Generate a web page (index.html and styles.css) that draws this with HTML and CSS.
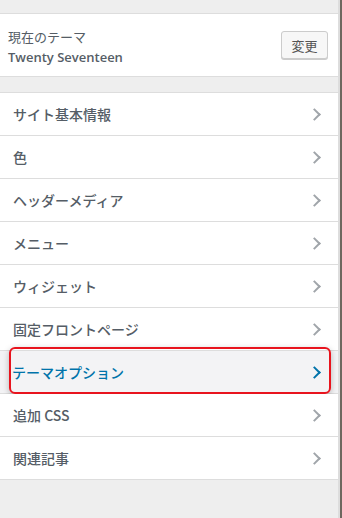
FILE: index.html
```html
<!DOCTYPE html>
<html lang="ja">
<head>
    <meta charset="UTF-8">
    <meta name="viewport" content="width=device-width, initial-scale=1.0">
    <title>カスタマイズ</title>
    <link rel="stylesheet" href="styles.css">
</head>
<body>
    <div class="panel">
        <div class="theme-box">
            <div class="theme-info">
                <div class="theme-label">現在のテーマ</div>
                <div class="theme-name">Twenty Seventeen</div>
            </div>
            <button class="change-btn">変更</button>
        </div>

        <ul class="section-list">
            <li class="section-item">サイト基本情報<span class="chevron"></span></li>
            <li class="section-item">色<span class="chevron"></span></li>
            <li class="section-item">ヘッダーメディア<span class="chevron"></span></li>
            <li class="section-item">メニュー<span class="chevron"></span></li>
            <li class="section-item">ウィジェット<span class="chevron"></span></li>
            <li class="section-item">固定フロントページ<span class="chevron"></span></li>
            <li class="section-item active">テーマオプション<span class="chevron"></span><span class="mark"></span></li>
            <li class="section-item">追加 CSS<span class="chevron"></span></li>
            <li class="section-item">関連記事<span class="chevron"></span></li>
        </ul>
    </div>
    <div class="preview"></div>
</body>
</html>
```

FILE: styles.css
```css
body {
    margin: 0;
    padding: 0;
    display: flex;
    height: 518px;
    overflow: hidden;
    background-color: #eeeeee;
    font-family: "Open Sans", "Noto Sans CJK JP", sans-serif;
    color: #555d66;
}
.panel {
    width: 338px;
    padding-top: 13px;
    background-color: #eeeeee;
    border-right: 2px solid #dddddd;
}
.preview {
    flex: 1;
    background-color: #6e675f;
}
.theme-box {
    display: flex;
    align-items: center;
    justify-content: space-between;
    height: 62px;
    padding: 0 10px 0 8px;
    background-color: #FFF;
    border-top: 1px solid #dddddd;
    border-bottom: 1px solid #dddddd;
}
.theme-info {
    line-height: 20px;
    padding-top: 3px;
}
.theme-label {
    font-size: 13px;
    color: #555d66;
}
.theme-name {
    font-size: 13px;
    font-weight: 600;
    color: #555d66;
}
.change-btn {
    width: 47px;
    height: 28px;
    padding: 0;
    font-family: "Noto Sans CJK JP", sans-serif;
    font-size: 13px;
    color: #555555;
    background-color: #f7f7f7;
    border: 1px solid #cccccc;
    border-radius: 3px;
    box-shadow: 0 1px 0 #cccccc;
    cursor: pointer;
}
.section-list {
    list-style: none;
    margin: 15px 0 0;
    padding: 0;
    border-top: 1px solid #dddddd;
}
.section-item {
    position: relative;
    display: flex;
    align-items: center;
    justify-content: space-between;
    height: 42px;
    padding: 0 17px 0 13px;
    background-color: #FFF;
    border-bottom: 1px solid #dddddd;
    font-family: "Noto Sans CJK JP", sans-serif;
    font-size: 14px;
    font-weight: 500;
    color: #555d66;
}
.chevron {
    width: 7px;
    height: 7px;
    margin-right: 2px;
    border-top: 2px solid #a0a5aa;
    border-right: 2px solid #a0a5aa;
    transform: rotate(45deg);
}
.section-item.active {
    background-color: #f3f3f5;
    color: #0073aa;
    padding-left: 12px;
}
.section-item.active .chevron {
    border-color: #0073aa;
}
.mark {
    position: absolute;
    top: -4px;
    left: 9px;
    right: 7px;
    bottom: -1px;
    border: 2px solid #e8141e;
    border-radius: 6px;
    box-shadow: 0 2px 6px rgba(0, 0, 0, 0.25);
}
```
